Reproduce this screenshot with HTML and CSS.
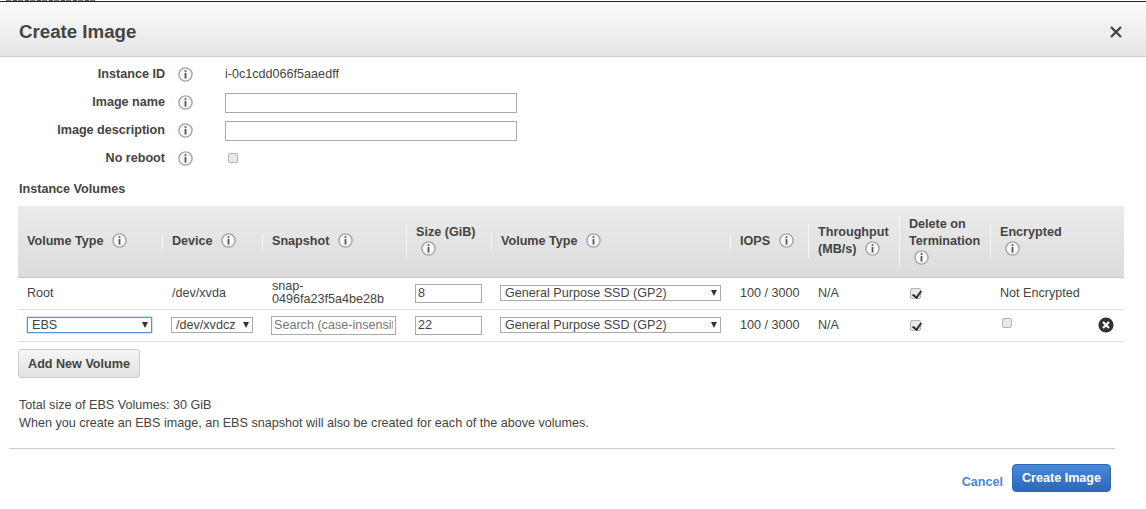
FILE: index.html
```html
<!DOCTYPE html>
<html lang="en">
<head>
    <meta charset="UTF-8">
    <meta name="viewport" content="width=device-width, initial-scale=1.0">
    <title>Create Image</title>
    <link rel="stylesheet" href="styles.css">
</head>
<body>
    <svg class="defs" width="0" height="0">
        <symbol id="info" viewBox="0 0 15 15">
            <circle cx="7.5" cy="7.5" r="6.6" fill="#f8f8f8" stroke="#a4a4a4" stroke-width="1.4"/>
            <rect x="6.6" y="3.2" width="1.8" height="1.7" fill="#555"/>
            <rect x="6.6" y="6" width="1.8" height="5.6" fill="#555"/>
        </symbol>
    </svg>

    <div class="backdrop-line"></div>

    <div class="modal-header">
        <h2>Create Image</h2>
        <svg class="close" width="14" height="14" viewBox="0 0 14 14">
            <path d="M2 2 L12 12 M12 2 L2 12" stroke="#444" stroke-width="2.4" fill="none"/>
        </svg>
    </div>

    <div class="details">
        <div class="detail-row">
            <label>Instance ID</label>
            <svg class="info"><use href="#info"/></svg>
            <span class="value">i-0c1cdd066f5aaedff</span>
        </div>
        <div class="detail-row">
            <label for="image-name">Image name</label>
            <svg class="info"><use href="#info"/></svg>
            <input type="text" id="image-name" class="wide-input">
        </div>
        <div class="detail-row">
            <label for="image-desc">Image description</label>
            <svg class="info"><use href="#info"/></svg>
            <input type="text" id="image-desc" class="wide-input">
        </div>
        <div class="detail-row">
            <label for="no-reboot">No reboot</label>
            <svg class="info"><use href="#info"/></svg>
            <input type="checkbox" id="no-reboot" class="check no-reboot">
        </div>
    </div>

    <h3 class="section-title">Instance Volumes</h3>

    <table class="volumes">
        <colgroup>
            <col class="c-type"><col class="c-device"><col class="c-snapshot"><col class="c-size"><col class="c-vtype">
            <col class="c-iops"><col class="c-through"><col class="c-delete"><col class="c-enc"><col class="c-remove">
        </colgroup>
        <thead>
            <tr>
                <th><div class="th-in first">Volume Type <svg class="info"><use href="#info"/></svg></div></th>
                <th><div class="th-in">Device <svg class="info"><use href="#info"/></svg></div></th>
                <th><div class="th-in">Snapshot <svg class="info"><use href="#info"/></svg></div></th>
                <th><div class="th-in">Size (GiB) <svg class="info"><use href="#info"/></svg></div></th>
                <th><div class="th-in">Volume Type <svg class="info"><use href="#info"/></svg></div></th>
                <th><div class="th-in">IOPS <svg class="info"><use href="#info"/></svg></div></th>
                <th><div class="th-in">Throughput (MB/s) <svg class="info"><use href="#info"/></svg></div></th>
                <th><div class="th-in">Delete on Termination <svg class="info"><use href="#info"/></svg></div></th>
                <th><div class="th-in">Encrypted <svg class="info"><use href="#info"/></svg></div></th>
                <th></th>
            </tr>
        </thead>
        <tbody>
            <tr>
                <td>Root</td>
                <td>/dev/xvda</td>
                <td class="snap">snap-<br>0496fa23f5a4be28b</td>
                <td><input type="text" class="size-input" value="8"></td>
                <td><div class="sel vtype"><select><option>General Purpose SSD (GP2)</option></select></div></td>
                <td>100 / 3000</td>
                <td>N/A</td>
                <td><input type="checkbox" class="check on" checked></td>
                <td>Not Encrypted</td>
                <td></td>
            </tr>
            <tr>
                <td><div class="sel ebs"><select><option>EBS</option></select></div></td>
                <td><div class="sel device"><select><option>/dev/xvdcz</option></select></div></td>
                <td><input type="text" class="snap-input" placeholder="Search (case-insensitive)"></td>
                <td><input type="text" class="size-input" value="22"></td>
                <td><div class="sel vtype"><select><option>General Purpose SSD (GP2)</option></select></div></td>
                <td>100 / 3000</td>
                <td>N/A</td>
                <td><input type="checkbox" class="check on" checked></td>
                <td><input type="checkbox" class="check enc"></td>
                <td>
                    <svg class="remove" width="16" height="16" viewBox="0 0 16 16">
                        <circle cx="8" cy="8" r="7.6" fill="#333"/>
                        <path d="M5 5 L11 11 M11 5 L5 11" stroke="#fff" stroke-width="2.2" fill="none"/>
                    </svg>
                </td>
            </tr>
        </tbody>
    </table>

    <button type="button" class="btn-add">Add New Volume</button>

    <p class="summary">Total size of EBS Volumes: 30 GiB<br>When you create an EBS image, an EBS snapshot will also be created for each of the above volumes.</p>

    <div class="modal-footer">
        <a href="#" class="cancel">Cancel</a>
        <button type="button" class="btn-create">Create Image</button>
    </div>
</body>
</html>
```

FILE: styles.css
```css
* {
    box-sizing: border-box;
}

body {
    font-family: "Liberation Sans", Arial, sans-serif;
    font-size: 12.6px;
    color: #444;
    background-color: #fff;
    margin: 0;
    height: 509px;
    overflow: hidden;
}

.defs {
    display: block;
    height: 0;
}

/* page behind the dialog only shows as a sliver of text above the line */
.backdrop-line {
    height: 2px;
    border-bottom: 1px solid #222;
    background: repeating-linear-gradient(90deg, #777 0 5px, #ddd 5px 7px, #556 7px 11px, #fff 11px 12px) 6px 0 / 90px 1px no-repeat;
}

.modal-header {
    height: 55px;
    display: flex;
    align-items: center;
    justify-content: space-between;
    padding: 5px 23px 0 19px;
    background: linear-gradient(#fbfbfb, #e5e5e5);
    border-bottom: 1px solid #ccc;
}

.modal-header h2 {
    margin: 0;
    font-size: 18.7px;
    font-weight: bold;
    color: #444;
}

.details {
    padding-top: 4px;
}

.detail-row {
    display: flex;
    align-items: center;
    height: 28px;
}

.detail-row label {
    width: 165px;
    margin-bottom: 3px;
    text-align: right;
    font-weight: bold;
    color: #444;
}

.info {
    width: 15px;
    height: 15px;
    vertical-align: -3px;
}

.detail-row .info {
    margin: 0 32px 1px 13px;
}

.value {
    margin-bottom: 2px;
}

.wide-input {
    width: 292px;
    height: 20px;
    border: 1px solid #aaa;
    outline: none;
}

.section-title {
    margin: 9px 0 10px 19px;
    font-size: 12.6px;
    font-weight: bold;
    color: #444;
}

.volumes {
    table-layout: fixed;
    border-collapse: collapse;
    width: 1106px;
    margin-left: 18px;
}

.c-type { width: 144px; }
.c-device { width: 100px; }
.c-snapshot { width: 144px; }
.c-size { width: 85px; }
.c-vtype { width: 239px; }
.c-iops { width: 78px; }
.c-through { width: 91px; }
.c-delete { width: 91px; }
.c-enc { width: 98px; }
.c-remove { width: 36px; }

.volumes th {
    height: 71px;
    padding: 0;
    text-align: left;
    font-weight: bold;
    line-height: 17px;
    color: #444;
    background: linear-gradient(#ebebeb, #dcdcdc);
    border-bottom: 1px solid #c8c8c8;
}

.th-in {
    margin-right: -1px;
    padding: 0 8px 0 9px;
    border-left: 1px solid #f6f6f6;
    border-right: 1px solid #f6f6f6;
}

.th-in.first {
    border-left: none;
    padding-left: 9px;
}

.th-in .info {
    margin-left: 5px;
}

.volumes td {
    height: 32px;
    padding: 0 0 0 10px;
    border-bottom: 1px solid #ddd;
    color: #444;
}

.volumes td:first-child {
    padding-left: 9px;
}

.snap {
    line-height: 13px;
}

.size-input, .snap-input {
    display: block;
    height: 19px;
    margin-left: -1px;
    padding: 0 2px;
    border: 1px solid #aaa;
    outline: none;
    font-family: inherit;
    font-size: 12.6px;
    color: #444;
}

.size-input {
    width: 67px;
}

.snap-input {
    width: 125px;
}

.snap-input::placeholder {
    color: #777;
}

.sel {
    position: relative;
    margin-left: -1px;
    height: 16px;
}

.sel select {
    appearance: none;
    display: block;
    width: 100%;
    height: 16px;
    padding: 0 0 0 4px;
    border: 1px solid #aaa;
    border-radius: 0;
    outline: none;
    background-color: #fff;
    font-family: inherit;
    font-size: 12.6px;
    color: #444;
}

.sel::after {
    content: "";
    position: absolute;
    right: 4px;
    top: 5px;
    border-left: 3.5px solid transparent;
    border-right: 3.5px solid transparent;
    border-top: 6px solid #333;
}

.vtype { width: 221px; }
.device { width: 82px; }

.ebs {
    width: 125px;
    margin-left: 0;
}

.ebs select {
    border-color: #5b8fd9;
    box-shadow: 0 0 2px #7aa7e6;
}

.check {
    appearance: none;
    position: relative;
    display: block;
    width: 10px;
    height: 10px;
    margin: 0;
    border: 1px solid #b4b4b4;
    border-radius: 2px;
    background-color: #e8e8e8;
}

.check.on {
    width: 11px;
    height: 11px;
    margin-left: 1px;
}

.check.on::after {
    content: "";
    position: absolute;
    left: 3px;
    top: 0;
    width: 4px;
    height: 7px;
    border-right: 2px solid #333;
    border-bottom: 2px solid #333;
    transform: rotate(35deg);
}

.no-reboot {
    margin: -3px 0 0 3px;
}

.enc {
    margin: -4px 0 0 2px;
}

.remove {
    display: block;
    margin-left: 0;
}

.btn-add {
    display: block;
    width: 122px;
    height: 29px;
    margin: 7px 0 0 18px;
    padding: 1px 0 0;
    border: 1px solid #ccc;
    border-radius: 3px;
    background: linear-gradient(#f5f5f5, #e2e2e2);
    font-family: inherit;
    font-size: 12.6px;
    font-weight: bold;
    color: #444;
}

.summary {
    margin: 18px 0 0 19px;
    line-height: 18px;
    color: #444;
}

.modal-footer {
    display: flex;
    justify-content: flex-end;
    align-items: center;
    gap: 9px;
    margin: 16px 31px 0 9px;
    padding: 15px 4px 0 0;
    border-top: 1px solid #ccc;
}

.cancel {
    margin-top: 8px;
    color: #4a86d6;
    font-weight: bold;
    text-decoration: none;
}

.btn-create {
    width: 99px;
    height: 28px;
    border: 1px solid #2d68b7;
    border-radius: 4px;
    background: linear-gradient(#4a88d8, #2b68ba);
    font-family: inherit;
    font-size: 12.6px;
    font-weight: bold;
    color: #fff;
}
```
